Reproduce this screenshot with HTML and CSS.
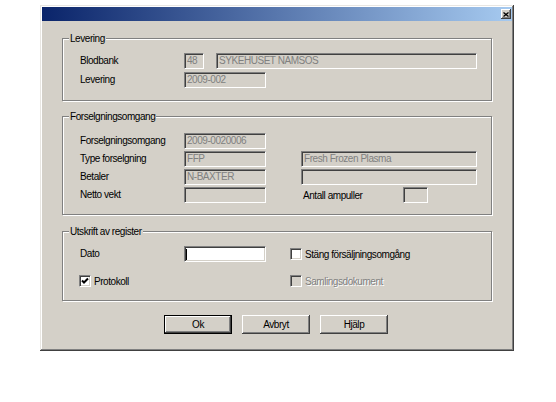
FILE: index.html
```html
<!DOCTYPE html>
<html>
<head>
<meta charset="utf-8">
<link rel="stylesheet" href="styles.css">
</head>
<body>
<div class="dialog">
  <div class="titlebar">
    <span class="close"><svg width="6" height="5" viewBox="0 0 6 5"><path d="M0.5 0.5 L5.5 4.5 M5.5 0.5 L0.5 4.5" stroke="#000" stroke-width="1.3" fill="none"/></svg></span>
  </div>
  <div class="content">
    <section class="group g1">
      <div class="legend">Levering</div>
      <div class="rows1">
        <div class="row"><span class="lbl">Blodbank</span><span class="field w-code">48</span><span class="field w-name">SYKEHUSET NAMSOS</span></div>
        <div class="row"><span class="lbl">Levering</span><span class="field w-std">2009-002</span></div>
      </div>
    </section>
    <section class="group g2">
      <div class="legend">Forselgningsomgang</div>
      <div class="grid2">
        <span class="lbl">Forselgningsomgang</span><span class="field">2009-0020006</span><span></span><span></span>
        <span class="lbl">Type forselgning</span><span class="field">FFP</span><span></span><span class="field">Fresh Frozen Plasma</span>
        <span class="lbl">Betaler</span><span class="field">N-BAXTER</span><span></span><span class="field"></span>
        <span class="lbl">Netto vekt</span><span class="field"></span><span></span><span class="antall"><span class="antall-lbl">Antall ampuller</span><span class="field w-small"></span></span>
      </div>
    </section>
    <section class="group g3">
      <div class="legend">Utskrift av register</div>
      <div class="grid3">
        <div class="cell"><span class="lbl">Dato</span><span class="field w-std edit"><span class="caret"></span></span></div>
        <div class="cell"><span class="check"></span><span class="chk-lbl">Stäng försäljningsomgång</span></div>
        <div class="cell"><span class="check first"><svg width="8" height="8" viewBox="0 0 8 8"><path d="M1 3.5 L3 5.5 L7 1.5" stroke="#000" stroke-width="2" fill="none"/></svg></span><span class="chk-lbl">Protokoll</span></div>
        <div class="cell"><span class="check disabled"></span><span class="chk-lbl disabled-text">Samlingsdokument</span></div>
      </div>
    </section>
    <div class="buttons">
      <button class="btn default">Ok</button>
      <button class="btn">Avbryt</button>
      <button class="btn">Hjälp</button>
    </div>
  </div>
</div>
</body>
</html>
```

FILE: styles.css
```css
body {
  margin: 0;
  background: #fff;
  font-family: "Liberation Sans", Arial, sans-serif;
  font-size: 10px;
  letter-spacing: -0.45px;
  color: #000;
}

.dialog {
  box-sizing: border-box;
  width: 474px;
  height: 346px;
  margin: 5px 0 0 40px;
  padding: 2px;
  background: #d4d0c8;
  box-shadow: inset -1px -1px #404040, inset 1px 1px #e8e6e2, inset -2px -2px #808080, inset 2px 2px #fff;
  display: flex;
  flex-direction: column;
}

.titlebar {
  height: 14px;
  background: linear-gradient(to right, #0a246a, #a6caf0);
  display: flex;
  justify-content: flex-end;
  align-items: center;
  padding-right: 1px;
}

.close {
  box-sizing: border-box;
  width: 10px;
  height: 10px;
  background: #d4d0c8;
  box-shadow: inset -1px -1px #404040, inset 1px 1px #fff, inset -2px -2px #808080;
  display: flex;
  align-items: center;
  justify-content: center;
}

.close svg { display: block; }

.content {
  padding: 11px 20px 0 20px;
  display: flex;
  flex-direction: column;
}

.group {
  border: 1px solid #808080;
  box-shadow: inset 1px 1px #fff, 1px 1px #fff;
}

.legend {
  width: fit-content;
  margin: -7px 0 0 6px;
  padding: 0 1px;
  line-height: 13px;
  background: #d4d0c8;
}

.g1 { margin-top: 6px; }
.g2 { margin-top: 15px; }
.g3 { margin-top: 16px; }

.rows1 {
  padding: 8px 0 12px 17px;
  display: flex;
  flex-direction: column;
  gap: 3px;
}

.row {
  display: flex;
  align-items: center;
  height: 16px;
}

.lbl {
  width: 104px;
  flex: none;
  line-height: 16px;
  white-space: nowrap;
}

.field {
  box-sizing: border-box;
  height: 16px;
  padding: 0 2px;
  line-height: 13px;
  color: #808080;
  white-space: nowrap;
  overflow: hidden;
  background: #d4d0c8;
  border: 1px solid;
  border-color: #808080 #fff #fff #808080;
  box-shadow: inset 1px 1px #404040, inset -1px -1px #d4d0c8;
  flex: none;
}

.w-code { width: 20px; }
.w-name { width: 261px; margin-left: 12px; }
.w-std { width: 82px; }
.w-small { width: 25px; }

.grid2 {
  padding: 10px 0 11px 17px;
  display: grid;
  grid-template-columns: 104px 82px 35px 176px;
  grid-auto-rows: 16px;
  row-gap: 2px;
  align-items: center;
}

.antall {
  display: flex;
  align-items: center;
  padding-left: 2px;
}

.antall-lbl {
  width: 100px;
  white-space: nowrap;
}

.grid3 {
  padding: 8px 0 11px 17px;
  display: grid;
  grid-template-columns: 210px 1fr;
  grid-template-rows: 16px 16px;
  row-gap: 11px;
}

.cell {
  display: flex;
  align-items: center;
}

.field.edit {
  background: #fff;
  display: flex;
  align-items: center;
  padding-left: 1px;
}

.caret {
  width: 1px;
  height: 11px;
  background: #000;
}

.check {
  box-sizing: border-box;
  width: 12px;
  height: 12px;
  flex: none;
  background: #fff;
  border: 1px solid;
  border-color: #808080 #fff #fff #808080;
  box-shadow: inset 1px 1px #404040, inset -1px -1px #d4d0c8;
  display: flex;
  align-items: center;
  justify-content: center;
}

.check svg { display: block; }

.check.first { margin-left: -1px; }

.check.disabled { background: #d4d0c8; }

.chk-lbl {
  margin-left: 3px;
  white-space: nowrap;
}

.disabled-text {
  color: #808080;
  text-shadow: 1px 1px #fff;
}

.buttons {
  margin-top: 14px;
  display: flex;
  justify-content: center;
  gap: 10px;
  padding-right: 2px;
}

.btn {
  box-sizing: border-box;
  width: 68px;
  height: 19px;
  padding: 0;
  border: 0;
  background: #d4d0c8;
  font: inherit;
  letter-spacing: inherit;
  color: #000;
  box-shadow: inset -1px -1px #404040, inset 1px 1px #fff, inset -2px -2px #808080, inset 2px 2px #d4d0c8;
}

.btn.default {
  box-shadow: inset 0 0 0 1px #000, inset -2px -2px #404040, inset 2px 2px #fff, inset -3px -3px #808080;
}
```
